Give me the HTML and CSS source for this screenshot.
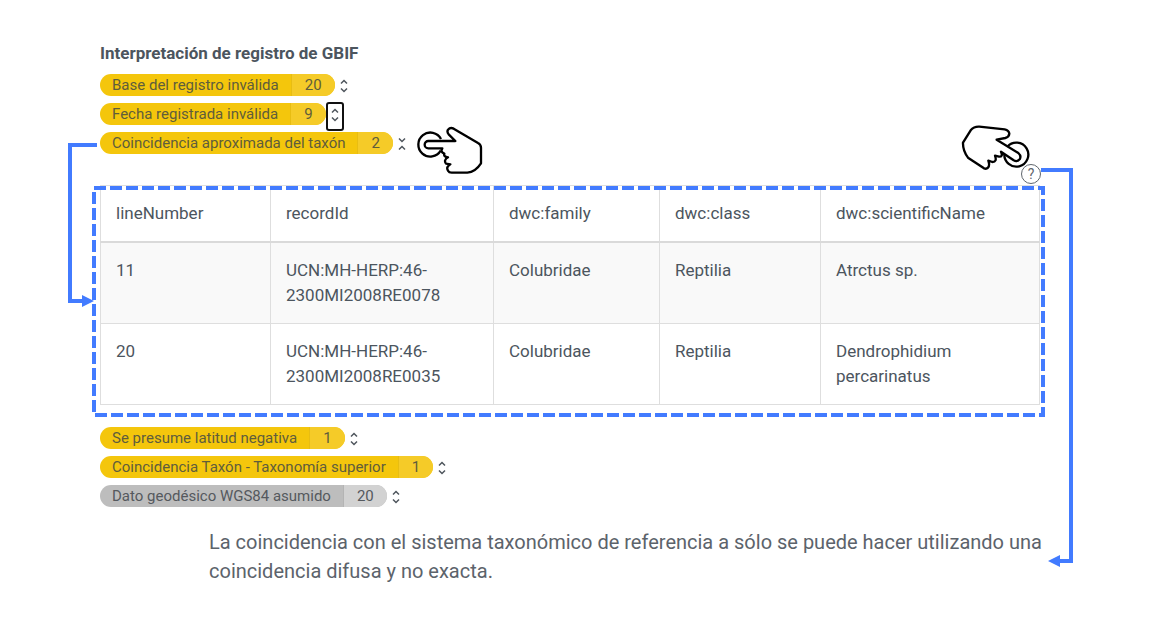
FILE: index.html
```html
<!DOCTYPE html>
<html lang="es">
<head>
<meta charset="utf-8">
<meta name="viewport" content="width=device-width, initial-scale=1">
<title>Interpretación de registro de GBIF</title>
<link rel="stylesheet" href="styles.css">
</head>
<body>
<svg width="0" height="0" class="defs" aria-hidden="true">
  <symbol id="expand" viewBox="0 0 8 14"><path d="M1 4.5 4 1.5 7 4.5M1 9.5 4 12.5 7 9.5"/></symbol>
  <symbol id="collapse" viewBox="0 0 8 14"><path d="M1 1.5 4 4.5 7 1.5M1 12.5 4 9.5 7 12.5"/></symbol>
</svg>
<main class="report">
  <h1 class="title">Interpretación de registro de GBIF</h1>
  <ul class="issues">
    <li class="issue"><span class="tag"><span class="tag-name">Base del registro inválida</span><span class="tag-count">20</span></span><button class="toggle" type="button" aria-label="Expandir"><svg class="chevrons"><use href="#expand"/></svg></button></li>
    <li class="issue"><span class="tag"><span class="tag-name">Fecha registrada inválida</span><span class="tag-count">9</span></span><button class="toggle toggle-focused" type="button" aria-label="Expandir"><svg class="chevrons"><use href="#expand"/></svg></button></li>
    <li class="issue"><span class="tag"><span class="tag-name">Coincidencia aproximada del taxón</span><span class="tag-count">2</span></span><button class="toggle" type="button" aria-label="Contraer"><svg class="chevrons"><use href="#collapse"/></svg></button>
      <svg class="hand hand-left" viewBox="108 48 201 147" aria-hidden="true">
        <path d="M183 87A36 36 0 1 0 182 122"/>
        <path d="M226 93H145a11 11 0 0 0 0 22H187Q180 126 193 131Q190 140 204 142Q190 150 198 161L211 163Q197 171 204 182Q207 188 215 188H262Q286 186 303 160V113Q303 104 294 99L221 56Q211 51 204 59Q200 66 206 73Z"/>
      </svg>
    </li>
  </ul>

  <section class="detail">
    <table class="records">
      <colgroup><col class="c-line"><col class="c-record"><col class="c-family"><col class="c-class"><col class="c-name"></colgroup>
      <thead>
        <tr><th>lineNumber</th><th>recordId</th><th>dwc:family</th><th>dwc:class</th><th>dwc:scientificName</th></tr>
      </thead>
      <tbody>
        <tr><td>11</td><td>UCN:MH-HERP:46-2300MI2008RE0078</td><td>Colubridae</td><td>Reptilia</td><td>Atrctus sp.</td></tr>
        <tr><td>20</td><td>UCN:MH-HERP:46-2300MI2008RE0035</td><td>Colubridae</td><td>Reptilia</td><td>Dendrophidium percarinatus</td></tr>
      </tbody>
    </table>
    <div class="outline"><svg class="outline-svg" aria-hidden="true"><rect width="100%" height="100%"/></svg></div>
    <div class="link-left"></div>
    <svg class="hand hand-right" viewBox="63 42 210 141" aria-hidden="true">
      <path d="M202 110A36 36 0 1 1 193 132"/>
      <path d="M170 89L235 129Q245 138 239 148Q231 157 221 151L183 125Q190 141 177 140L165 137Q172 156 157 156L145 152Q150 167 144 173Q139 178 132 175L84 143Q68 122 69 98L92 61Q102 49 118 50L194 58Q207 61 208 71Q207 81 196 84Z"/>
    </svg>
    <button class="help" type="button" aria-label="Ayuda">?</button>
  </section>

  <ul class="issues">
    <li class="issue"><span class="tag"><span class="tag-name">Se presume latitud negativa</span><span class="tag-count">1</span></span><button class="toggle" type="button" aria-label="Expandir"><svg class="chevrons"><use href="#expand"/></svg></button></li>
    <li class="issue"><span class="tag"><span class="tag-name">Coincidencia Taxón - Taxonomía superior</span><span class="tag-count">1</span></span><button class="toggle" type="button" aria-label="Expandir"><svg class="chevrons"><use href="#expand"/></svg></button></li>
    <li class="issue"><span class="tag tag-muted"><span class="tag-name">Dato geodésico WGS84 asumido</span><span class="tag-count">20</span></span><button class="toggle" type="button" aria-label="Expandir"><svg class="chevrons"><use href="#expand"/></svg></button></li>
  </ul>
  <p class="note">La coincidencia con el sistema taxonómico de referencia a sólo se puede hacer utilizando una coincidencia difusa y no exacta.</p>
  <div class="link-right"></div>
</main>
</body>
</html>
```
FILE: styles.css
```css
* { box-sizing: border-box; }
body {
  margin: 0;
  background: #fff;
  color: #4c555e;
  font-family: Roboto, "Liberation Sans", sans-serif;
}
.defs { position: absolute; }
.report {
  position: relative;
  padding: 41px 112px 38px 100px;
}
.title {
  margin: 0 0 8px;
  font-size: 17px;
  line-height: 24px;
  font-weight: 700;
}
.issues {
  margin: 0;
  padding: 0;
  list-style: none;
}
.issue {
  display: flex;
  align-items: flex-start;
  position: relative;
  height: 29px;
  width: max-content;
}
.tag {
  display: flex;
  margin-top: 1px;
  border-radius: 11px;
  overflow: hidden;
  background: #f4c60c;
  color: #5f5d3c;
  font-size: 15px;
  line-height: 22px;
}
.tag-name { padding: 0 12px; }
.tag-count {
  padding: 0 13px;
  background: #f5cb28;
  border-left: 1px solid #e8bd12;
}
.tag-muted { background: #bdbdbd; color: #55595e; }
.tag-muted .tag-count { background: #d2d2d2; border-color: #b4b4b4; }
.toggle {
  width: 18px;
  height: 29px;
  padding: 6px 0 0;
  border: 0;
  border-radius: 3px;
  background: #fff;
  display: flex;
  justify-content: center;
  align-items: flex-start;
}
.toggle-focused { box-shadow: inset 0 0 0 2px #111; }
.chevrons {
  width: 8px;
  height: 14px;
  fill: none;
  stroke: #4f565d;
  stroke-width: 1.5;
}
.hand {
  position: absolute;
  fill: none;
  stroke: #000;
  stroke-width: 7;
  stroke-linejoin: round;
}
.hand-left { width: 67px; height: 49px; left: 316px; top: -5px; }
.hand-right { width: 70px; height: 47px; right: 9px; top: -61px; }

.detail {
  position: relative;
  margin: 25px 0 21px;
}
.records {
  width: 100%;
  table-layout: fixed;
  border-collapse: collapse;
  font-size: 17px;
  line-height: 25px;
}
.c-line { width: 170px; }
.c-record { width: 223px; }
.c-family { width: 166px; }
.c-class { width: 161px; }
.records th, .records td {
  padding: 15px;
  border: 1px solid #dedede;
  text-align: left;
  vertical-align: top;
  font-weight: 400;
}
.records th { border-bottom: 2px solid #dadada; }
.records tbody tr:first-child { background: #f9f9f9; }
.outline {
  position: absolute;
  inset: 3px -3px -10px -6px;
  pointer-events: none;
}
.outline-svg {
  display: block;
  width: 100%;
  height: 100%;
  overflow: visible;
  fill: none;
  stroke: #427bff;
  stroke-width: 4;
  stroke-dasharray: 12 4;
}
.link-left {
  position: absolute;
  top: -42px;
  left: -32px;
  width: 29px;
  height: 160px;
  border: 4px solid #427bff;
  border-right: 0;
  clip-path: polygon(0 0, 100% 0, 100% 50%, 50% 50%, 50% 100%, 0 100%);
}
.detail::before {
  content: "";
  position: absolute;
  left: -18px;
  top: 110px;
  border: 6px solid transparent;
  border-left: 12px solid #427bff;
  border-right: 0;
}
.help {
  position: absolute;
  right: -1px;
  top: -21px;
  width: 20px;
  height: 20px;
  padding: 0;
  border: 1px solid #5f666d;
  border-radius: 50%;
  background: #fff;
  color: #5f666d;
  font: 14px/18px Roboto, sans-serif;
  text-align: center;
}
.note {
  margin: 15px -12px 0 109px;
  font-size: 20px;
  line-height: 29px;
  color: #5c636b;
}
.link-right {
  position: absolute;
  top: 168px;
  right: 79px;
  bottom: 61px;
  width: 32px;
  border: 4px solid #427bff;
  border-left: 0;
  border-bottom: 0;
}
.link-right::before {
  content: "";
  position: absolute;
  right: -4px;
  bottom: 0;
  width: 18px;
  height: 4px;
  background: #427bff;
}
.link-right::after {
  content: "";
  position: absolute;
  right: 9px;
  bottom: -4px;
  border: 6px solid transparent;
  border-right: 12px solid #427bff;
  border-left: 0;
}
```
